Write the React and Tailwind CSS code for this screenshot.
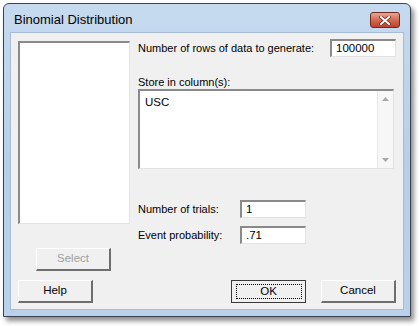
import React from 'react';

const font = { fontFamily: '"Liberation Sans", Arial, sans-serif' };

const Sunken = ({ className = '', children }) => (
  <div className={`bg-white border-t-2 border-l-2 border-t-[#8a8a8a] border-l-[#8a8a8a] border-b border-r border-b-[#e3e3e3] border-r-[#e3e3e3] ${className}`}>
    {children}
  </div>
);

const Field = ({ value, className = '' }) => (
  <Sunken className={`w-[66px] h-[18px] flex items-center pl-[4px] text-[11.5px] leading-none text-black ${className}`}>
    {value}
  </Sunken>
);

const Btn = ({ children, disabled, isDefault }) => (
  <div
    className={`w-[75px] h-[23px] flex items-center justify-center bg-[#f0f0f0] text-[11.5px] ${
      isDefault
        ? 'border border-[#3a3a3a]'
        : 'border-t border-l border-t-white border-l-white border-b-2 border-r-2 border-b-[#6e6e6e] border-r-[#6e6e6e]'
    } ${disabled ? 'text-[#a0a0a0]' : 'text-black'}`}
  >
    {isDefault ? (
      <div className="w-[66px] h-[15px] border border-dotted border-black flex items-center justify-center leading-none">
        {children}
      </div>
    ) : (
      children
    )}
  </div>
);

export default function App() {
  return (
    <div className="w-[419px] h-[326px] bg-white pl-[3px] pt-[3px]" style={font}>
      <div className="w-[408px] h-[314px] rounded-t-[6px] border border-[#3b4250] bg-gradient-to-b from-[#c6daef] via-[#b7cfe9] to-[#b9d1ea] shadow-[3px_4px_5px_rgba(0,0,0,0.45)] flex flex-col">
        {/* title bar */}
        <div className="h-[28px] flex items-center justify-between pl-[10px] pr-[10px] pt-[4px]">
          <span className="text-[13px] text-black">Binomial Distribution</span>
          <div className="w-[30px] h-[16px] rounded-[3px] border border-[#6d2b20] bg-gradient-to-b from-[#e9a595] via-[#d36a52] to-[#c0402a] flex items-center justify-center">
            <svg width="12" height="9" viewBox="0 0 12 9">
              <path d="M2 1 L10 8 M10 1 L2 8" stroke="#5a2018" strokeWidth="3.4" strokeLinecap="square" />
              <path d="M2 1 L10 8 M10 1 L2 8" stroke="#ffffff" strokeWidth="2" strokeLinecap="square" />
            </svg>
          </div>
        </div>

        {/* client area */}
        <div className="mx-[6px] h-[278px] bg-[#f0f0f0] border border-[#a6bcd6] flex flex-col px-[7px] pt-[6px] text-[11px] text-black">
          <div className="flex">
            <div className="w-[112px] flex flex-col">
              <Sunken className="h-[183px] mt-[2px]" />
              <div className="mt-[24px] ml-[18px]">
                <Btn disabled>Select</Btn>
              </div>
            </div>

            <div className="ml-[8px] flex-1 flex flex-col">
              <div className="flex items-center justify-between h-[18px]">
                <span className="whitespace-nowrap">Number of rows of data to generate:</span>
                <Field value="100000" />
              </div>
              <div className="mt-[18px] h-[14px] leading-[14px]">Store in column(s):</div>
              <Sunken className="w-[256px] h-[80px] flex">
                <div className="flex-1 pl-[5px] pt-[3px] text-[11.5px]">USC</div>
                <div className="w-[16px] bg-[#f7f7f7] border-l border-[#e6e6e6] flex flex-col items-center justify-between py-[6px]">
                  <svg width="7" height="4" viewBox="0 0 7 4"><path d="M0 4 L3.5 0 L7 4 Z" fill="#a8a8a8" /></svg>
                  <svg width="7" height="4" viewBox="0 0 7 4"><path d="M0 0 L3.5 4 L7 0 Z" fill="#a8a8a8" /></svg>
                </div>
              </Sunken>
              <div className="mt-[31px] flex items-center h-[18px]">
                <span className="w-[102px]">Number of trials:</span>
                <Field value="1" />
              </div>
              <div className="mt-[8px] flex items-center h-[18px]">
                <span className="w-[102px]">Event probability:</span>
                <Field value=".71" />
              </div>
            </div>
          </div>

          <div className="mt-[9px] flex items-center">
            <Btn>Help</Btn>
            <div className="ml-[138px]">
              <Btn isDefault>OK</Btn>
            </div>
            <div className="ml-[15px]">
              <Btn>Cancel</Btn>
            </div>
          </div>
        </div>
      </div>
    </div>
  );
}
